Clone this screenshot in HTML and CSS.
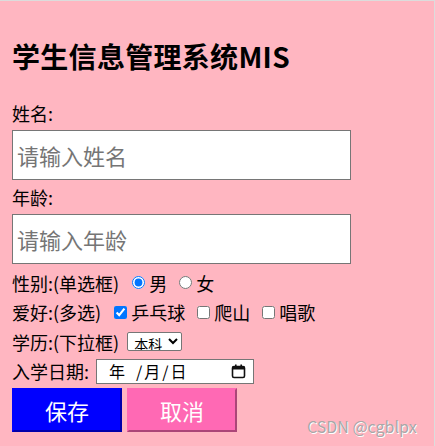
FILE: index.html
```html
<!DOCTYPE html>
<html lang="zh-CN">
<head>
<meta charset="UTF-8">
<meta name="viewport" content="width=device-width, initial-scale=1.0">
<title>学生信息管理系统MIS</title>
<link rel="stylesheet" href="styles.css">
</head>
<body>
<h2 class="title">学生信息管理系统MIS</h2>
<form class="form">
    <div class="field">
        <label class="field-label">姓名:</label>
        <input class="text-input" type="text" placeholder="请输入姓名">
    </div>
    <div class="field">
        <label class="field-label">年龄:</label>
        <input class="text-input" type="text" placeholder="请输入年龄">
    </div>
    <div class="rows">
        <div class="row">
            <span>性别:(单选框)</span>
            <input class="choice" type="radio" name="sex" checked><span>男</span>
            <input class="choice" type="radio" name="sex"><span>女</span>
        </div>
        <div class="row">
            <span>爱好:(多选)</span>
            <input class="choice" type="checkbox" checked><span>乒乓球</span>
            <input class="choice" type="checkbox"><span>爬山</span>
            <input class="choice" type="checkbox"><span>唱歌</span>
        </div>
        <div class="row">
            <span>学历:(下拉框)</span>
            <select class="select">
                <option>本科</option>
                <option>专科</option>
                <option>研究生</option>
            </select>
        </div>
        <div class="row">
            <span>入学日期:</span>
            <div class="date">
                <span class="seg year">年</span><span class="sep">/</span><span class="seg">月</span><span class="sep">/</span><span class="seg">日</span>
                <svg class="cal" width="15" height="15" viewBox="0 0 15 15">
                    <rect x="1.5" y="2.5" width="12" height="11" rx="1.5" fill="none" stroke="#111" stroke-width="1.6"/>
                    <rect x="1.5" y="2.5" width="12" height="3" fill="#111"/>
                    <rect x="4" y="0.5" width="1.6" height="3" fill="#111"/>
                    <rect x="9.4" y="0.5" width="1.6" height="3" fill="#111"/>
                </svg>
            </div>
        </div>
    </div>
    <div class="actions">
        <button type="button" class="btn save">保存</button>
        <button type="button" class="btn cancel">取消</button>
    </div>
</form>
<div class="watermark">CSDN @cgblpx</div>
</body>
</html>
```

FILE: styles.css
```css
html, body {
    height: 100%;
}
body {
    margin: 0;
    padding: 0 0 0 12px;
    box-sizing: border-box;
    background-color: #FFB6C1; /* lightpink */
    border-top: 1px solid #dcdcdc;
    border-right: 1px solid #dcdcdc;
    font-family: "Noto Sans CJK SC", "Noto Sans", sans-serif;
    font-size: 18px;
    color: #000;
    position: relative;
}
.title {
    margin: 37px 0 26px;
    font-size: 28px;
    line-height: 36px;
    font-weight: bold;
    letter-spacing: 0.3px;
}
.field-label {
    display: block;
    line-height: 26px;
}
.text-input {
    display: block;
    box-sizing: border-box;
    width: 339px;
    height: 50px;
    margin: 4px 0;
    padding: 0 4px;
    border: 1px solid #767676;
    background: #fff;
    font-family: inherit;
    font-size: 22px;
}
.text-input::placeholder {
    color: #757575;
}
.row {
    display: flex;
    align-items: center;
    height: 29.5px;
    line-height: 26px;
}
.choice {
    width: 13px;
    height: 13px;
    margin: 0 4px 0 12px;
}
.row > span:first-child + .choice {
    margin-left: 13px;
}
.select {
    margin-left: 8px;
    width: 55px;
    height: 19px;
    padding: 0 0 0 2px;
    font-family: inherit;
    font-size: 14px;
    line-height: 17px;
    border: 1px solid #767676;
    border-radius: 2px;
    background: #fff;
}
.date {
    display: flex;
    align-items: center;
    box-sizing: border-box;
    width: 158px;
    height: 25px;
    margin-left: 7px;
    padding-left: 12px;
    border: 1px solid #767676;
    background: #fff;
    font-size: 16px;
    line-height: 20px;
}
.year {
    margin-right: 9px;
}
.sep {
    margin: 0 2px;
}
.cal {
    margin-left: auto;
    margin-right: 7px;
}
.actions {
    display: flex;
    gap: 5px;
    margin-top: 2px;
}
.btn {
    width: 110px;
    height: 44px;
    padding: 0;
    border: 2px solid;
    font-family: inherit;
    font-size: 22px;
    color: #fff;
    cursor: pointer;
}
.save {
    background-color: #0000ff;
    border-color: #0000ff #0000ab #0000ab #0000ff;
}
.cancel {
    background-color: #ff69b4; /* hotpink */
    border-color: #ff69b4 #ab4678 #ab4678 #ff69b4;
}
.watermark {
    position: absolute;
    left: 307px;
    top: 413px;
    font-size: 16px;
    color: #a8a8a8;
    text-shadow: 1px 1px 0 #fff;
    white-space: nowrap;
}
```
